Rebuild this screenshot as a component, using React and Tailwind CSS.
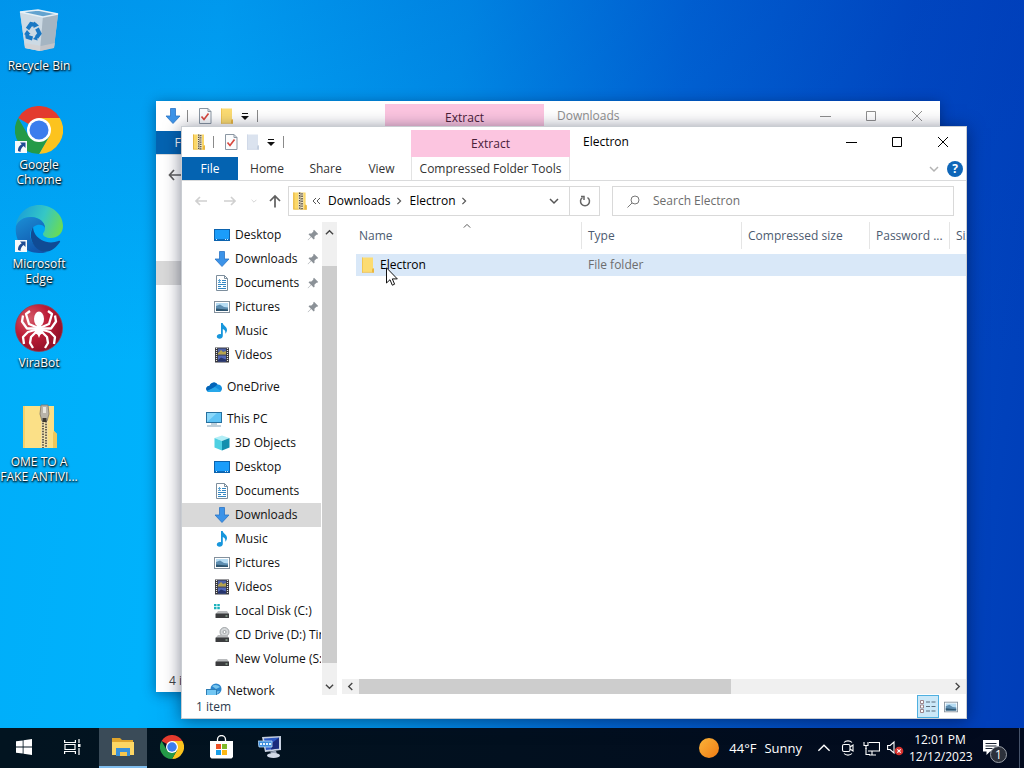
import React from "react";

/* ── Small icons ── */
const ZipIcon = ({ className }) => (
  <svg viewBox="0 0 16 16" className={className} aria-hidden="true">
    <path d="M2 .5h11v10.500l1 1v3.500H2z" fill="#fbd869" />
    <path d="M2 .5h1v15H2zM2 14.800h12v.7H2z" fill="#e6b640" />
    <path d="M12 15.500v-3l1-1.500 1 1v3.500z" fill="#e9b740" />
    <rect x="6.500" y="0.500" width="4.500" height="15" fill="#efe6c8" />
    <path d="M7.700.5v15M9.800 1v14.500" stroke="#4d463c" strokeWidth="1.300" strokeDasharray="1.200 1" />
    <path d="M8.700 1.500v14" stroke="#7a705f" strokeWidth="0.800" strokeDasharray="1 1.200" />
  </svg>
);

const FolderIcon = ({ className, faded }) => (
  <svg viewBox="0 0 16 16" className={className} aria-hidden="true">
    <path d="M2 .5h11v10.500l1 1v3.500H2z" fill={faded ? "#dbe3ef" : "#fcdc72"} />
    <path d="M2 .5h.8v15H2z" fill={faded ? "#cdd7e6" : "#efc24c"} />
    <path d="M12 15.500v-3l1-1.500 1 1v3.500z" fill={faded ? "#c5d0e0" : "#eab640"} />
    <path d="M2 14.900h12v.7H2z" fill={faded ? "#cdd7e6" : "#ebbd52"} />
  </svg>
);

const CheckDocIcon = ({ className }) => (
  <svg viewBox="0 0 16 16" className={className} aria-hidden="true">
    <path d="M2.500.5h8.500l3 3v12H2.500z" fill="#fbfcfd" stroke="#8b97a3" />
    <path d="M11 .5v3h3" fill="none" stroke="#8b97a3" />
    <path d="M4.500 8.500l2.500 3 4.500-6" fill="none" stroke="#d8483f" strokeWidth="1.700" />
  </svg>
);

const DownArrowIcon = ({ className }) => (
  <svg viewBox="0 0 16 16" className={className} aria-hidden="true">
    <path d="M5.500.5h5v7.500h4.500L8 15.500 1 8h4.500z" fill="#3c93e8" stroke="#2a74c5" strokeWidth="0.800" />
  </svg>
);

const DesktopIcon = ({ className }) => (
  <svg viewBox="0 0 16 16" className={className} aria-hidden="true">
    <rect x="0.500" y="2.500" width="15" height="11" fill="#1b9dfa" stroke="#0c63ae" />
    <path d="M1 12.500h14" stroke="#0b6cbd" />
    <path d="M2 12.500h1M11 12.500h1M13 12.500h1" stroke="#cfe8fb" />
  </svg>
);

const DocumentIcon = ({ className }) => (
  <svg viewBox="0 0 16 16" className={className} aria-hidden="true">
    <path d="M2.500.5h8l3 3v12h-11z" fill="#fff" stroke="#7d8e9d" />
    <path d="M10.500.5v3h3" fill="none" stroke="#7d8e9d" />
    <path d="M8 5.500h4M8 7.500h4M4 9.500h8M4 11.500h3M9 11.500h3M4 13.500h8" stroke="#3487c3" />
    <path d="M4 5.500h3M5.500 4v4M4 7.500h3" stroke="#5fa5d4" />
  </svg>
);

const PictureIcon = ({ className }) => (
  <svg viewBox="0 0 16 16" className={className} aria-hidden="true">
    <rect x="0.500" y="2.500" width="15" height="11" fill="#fff" stroke="#84919d" />
    <rect x="2" y="4" width="12" height="8" fill="#b6dcf3" />
    <path d="M2 7l4-1.500 4 2.500 4 .5V12H2z" fill="#5d8db0" />
    <path d="M2 9.500l5 .5 7 .5V12H2z" fill="#2d5570" />
  </svg>
);

const MusicIcon = ({ className }) => (
  <svg viewBox="0 0 16 16" className={className} aria-hidden="true">
    <path d="M7 0h1.700c.5 2.500 4.300 3.500 4.300 7 0 1.500-.7 2.900-1.700 3.800.5-2.500-.5-4-2.500-4.800V13c0 1.500-1.500 2.800-3.300 2.800-1.600 0-2.700-.9-2.700-2.200 0-1.700 2-2.900 4.200-2.400z" fill="#1796dc" />
  </svg>
);

const VideoIcon = ({ className }) => (
  <svg viewBox="0 0 16 16" className={className} aria-hidden="true">
    <rect x="1" y="0.500" width="14" height="15" fill="#38383e" />
    <path d="M2.500 1v14M13.500 1v14" stroke="#e8e8e8" strokeWidth="1.200" strokeDasharray="1 1" />
    <rect x="4" y="1.500" width="8" height="6" fill="#4d61a8" />
    <path d="M4 6l3-3 2 2 3-1v3.500H4z" fill="#b5a34d" />
    <rect x="4" y="8.500" width="8" height="6" fill="#5268b8" />
    <path d="M4 13l3-2.500 5 2v2H4z" fill="#27346c" />
  </svg>
);

const CloudIcon = ({ className }) => (
  <svg viewBox="0 0 16 16" className={className} aria-hidden="true">
    <path d="M3.500 7A4.500 4.500 0 0 1 11.500 5.500c3 0 4.500 2 4.500 4 0 2-1.500 3.500-3.500 3.500H3.500A3 3 0 0 1 3.500 7z" fill="#1490df" />
    <path d="M0 10c0-2 1.500-3 3.500-3.300C4.500 3.500 9 2 11.500 5.500L6 10l-5 2z" fill="#0364b8" />
    <path d="M1 12l8-4 6 4c-.5.600-1.500 1-2.500 1h-9c-1 0-2-.4-2.500-1z" fill="#28a8ea" />
  </svg>
);

const PcIcon = ({ className }) => (
  <svg viewBox="0 0 16 16" className={className} aria-hidden="true">
    <rect x="0.500" y="1.500" width="15" height="10" fill="#5fc3f5" stroke="#28719f" />
    <path d="M1 11V2h10z" fill="#8bd8fa" />
    <path d="M5 13h6M1 15h14" stroke="#7fa0b5" />
  </svg>
);

const CubeIcon = ({ className }) => (
  <svg viewBox="0 0 16 16" className={className} aria-hidden="true">
    <path d="M8 .5L15.500 3 8 6 .5 3z" fill="#b3eef6" />
    <path d="M.5 3L8 6v9.500L.5 12.500z" fill="#4fd0e2" />
    <path d="M15.500 3L8 6v9.500l7.500-3z" fill="#148fad" />
  </svg>
);

const DiskIcon = ({ className, kind }) => (
  <svg viewBox="0 0 16 16" className={className} aria-hidden="true">
    {kind === "cd" && (
      <>
        <circle cx="10.500" cy="5" r="4.500" fill="#d5d8da" stroke="#8c9093" strokeWidth="0.800" />
        <circle cx="10.500" cy="5" r="1.500" fill="#fff" stroke="#8c9093" strokeWidth="0.800" />
      </>
    )}
    {kind === "system" && <path d="M0 1h2.500v2.200H0zM3.300 1h2.500v2.200H3.300zM0 4h2.500v2.200H0zM3.300 4h2.500v2.200H3.300z" fill="#1bb2bd" />}
    <path d="M4 8h9l2 3H1.500z" fill="#b9bbbd" />
    <rect x="1.500" y="10.500" width="13.500" height="4.500" rx="0.500" fill="#3b3c3e" />
    <path d="M11.500 13h2" stroke="#b6d9bd" />
  </svg>
);

const NetworkIcon = ({ className }) => (
  <svg viewBox="0 0 16 16" className={className} aria-hidden="true">
    <circle cx="10" cy="6" r="5.500" fill="#2b86cd" />
    <path d="M6 3c3-2 6-1 8 1l-4 2zM8 9l6-1-3 3z" fill="#77c5ee" />
    <rect x="0.500" y="6.500" width="10" height="6" fill="#72c6f3" stroke="#2f7eb4" />
    <path d="M2 14.500h8" stroke="#6f93ac" />
  </svg>
);

const PinIcon = ({ className }) => (
  <svg viewBox="0 0 12 12" className={className} aria-hidden="true">
    <path d="M7 .8L11.200 5l-1 .8-.8-.1-2 2 .2 2-.9.9-2.500-2.500L1 11.200l-.3-.3 3.200-3.200L1.500 5.300l.9-.9 2 .2 2-2-.2-.9z" fill="#8b9197" />
  </svg>
);

const Chevron = ({ className, d = "M1 3l4 4 4-4", width = 1.5 }) => (
  <svg viewBox="0 0 10 10" className={className} fill="none" stroke="currentColor" strokeWidth={width} aria-hidden="true">
    <path d={d} />
  </svg>
);

const UP = "M1 7l4-4 4 4";
const LEFT = "M7 1L3 5l4 4";
const RIGHT = "M3 1l4 4-4 4";

const ArrowIcon = ({ className, d }) => (
  <svg viewBox="0 0 14 14" className={className} fill="none" stroke="currentColor" strokeWidth="1.700" aria-hidden="true">
    <path d={d} />
  </svg>
);

const CaretBar = () => (
  <svg viewBox="0 0 8 7" className="h-[7px] w-2" aria-hidden="true">
    <path d="M1 0h6v1H1zM0 3h8L4 7z" fill="#111" />
  </svg>
);

/* ── Desktop shortcut icons ── */
const ShortcutBadge = () => (
  <g>
    <rect x="0" y="35" width="12" height="12" fill="#f7f9fb" />
    <path d="M5 36.500h5.500V42l-1.900-1.900C6.500 42 5.500 43.500 5.500 46L3 45c-.3-3 1.200-5.200 3.700-6.800z" fill="#1f4b93" />
  </g>
);

const RecycleBinIcon = () => (
  <svg viewBox="0 0 48 48" className="size-12" aria-hidden="true">
    <path d="M5 5l18-2 20 4-4 33-14 4-15-3z" fill="#c3d3de" />
    <path d="M5 5l23 4-3 35-15-3z" fill="#cddae4" />
    <path d="M28 9l15-2-4 34-14 3z" fill="#a5b5c2" />
    <path d="M10 36l16 3 14-3-1 5-14 3-15-3z" fill="#d6cfcd" opacity="0.600" />
    <path d="M5 5l18-2 20 4-15 3z" fill="#63a3cf" stroke="#e6f0f6" strokeWidth="1.300" />
    <g fill="none" stroke="#1a78c4" strokeWidth="4">
      <path d="M12.500 22l3.500-5 5 1" />
      <path d="M22 21.500l2.500 5-3 4" />
      <path d="M17.500 31.500l-5-1.500-.5-4" />
    </g>
    <path d="M19 14.500l5 4-5.500 2.500zM22.500 33.500l-4.500-1.500 4-4zM9 27.500l3-4.500 3.500 4z" fill="#1a78c4" />
  </svg>
);

const ChromeIcon = ({ className, shortcut }) => (
  <svg viewBox="0 0 48 48" className={className} aria-hidden="true">
    <path d="M24 24L3.200 12A24 24 0 0 1 44.800 12z" fill="#e33b2e" />
    <path d="M24 12h20.800A24 24 0 0 1 24 48l10.400-18z" fill="#fcc31e" />
    <path d="M13.600 30L3.200 12A24 24 0 0 0 24 48l10.400-18z" fill="#249a47" />
    <circle cx="24" cy="24" r="12" fill="#fff" />
    <circle cx="24" cy="24" r="9.500" fill="#3b7ded" />
    {shortcut && <ShortcutBadge />}
  </svg>
);

const EdgeIcon = () => (
  <svg viewBox="0 0 48 48" className="size-12" aria-hidden="true">
    <defs>
      <linearGradient id="edgeTop" x1="0" x2="1" y1="0.300" y2="0.600">
        <stop offset="0" stopColor="#1a9fd8" />
        <stop offset="0.550" stopColor="#35c7c5" />
        <stop offset="1" stopColor="#6adb55" />
      </linearGradient>
      <linearGradient id="edgeBody" x1="0" x2="0.500" y1="0" y2="1">
        <stop offset="0" stopColor="#1b8fd6" />
        <stop offset="1" stopColor="#1157ad" />
      </linearGradient>
    </defs>
    <path d="M1 21C2 9 12 0 24 0c14 0 24 10 24 21 0 8-6 12-12 12-5 0-8-2-8-4 0-1.500 2-2 2-6C30 17 24 12 16 12 8 12 3 16 1 21z" fill="url(#edgeTop)" />
    <path d="M1 21c2-5 7-9 15-9 8 0 14 5 14 11-1-3-5-4-8-3-6 2-8 8-6 14 2 7 9 11 16 13-3 1-5 1-8 1C9 48-1 36 1 21z" fill="url(#edgeBody)" />
    <path d="M18 22c-5 9-1 20 8 24 8 3 15-3 19-9 .5-1-.5-1.500-1.500-1-5 2-12 2-17-1-5-3-8-7-8.500-13z" fill="#104b94" />
    <ShortcutBadge />
  </svg>
);

const SpiderIcon = () => (
  <svg viewBox="0 0 48 48" className="size-12" aria-hidden="true">
    <defs>
      <radialGradient id="ball" cx="0.300" cy="0.300" r="0.800">
        <stop offset="0" stopColor="#d55a68" />
        <stop offset="0.500" stopColor="#bb1c36" />
        <stop offset="1" stopColor="#8c1027" />
      </radialGradient>
    </defs>
    <circle cx="24" cy="24" r="23.500" fill="url(#ball)" stroke="#9c3b4b" strokeWidth="0.800" />
    <ellipse cx="24" cy="15" rx="5" ry="7.500" fill="#fff" />
    <ellipse cx="24" cy="26" rx="4.500" ry="5" fill="#fff" />
    <path d="M22 29l2 5 2-5z" fill="#fff" />
    <g fill="none" stroke="#fff" strokeWidth="2.300" strokeLinejoin="round">
      <path d="M21 23l-7-3-3-10 4-3M27 23l7-3 3-10-4-3" />
      <path d="M20 24.500l-8 0-5-7 1-6M28 24.500l8 0 5-7-1-6" />
      <path d="M20 26l-7 2-5 5 1 7M28 26l7 2 5 5-1 7" />
      <path d="M21 28l-5 5-1 6 3 5M27 28l5 5 1 6-3 5" />
    </g>
  </svg>
);

const BigZipIcon = () => (
  <svg viewBox="0 0 48 48" className="size-12" aria-hidden="true">
    <path d="M8 3h31v25l3 3v14H8z" fill="#fbe087" />
    <path d="M8 3h2v42H8z" fill="#f6d169" />
    <path d="M38 45V30l1-2 3 3v14z" fill="#f0c75a" />
    <path d="M26 3h7v42h-7z" fill="#f0dfa6" />
    <path d="M28 17v28M31 18v27" stroke="#6a6254" strokeWidth="2" strokeDasharray="1.500 1.200" />
    <path d="M26 2h7l1 9-2 7h-5l-2-7z" fill="#b9b4aa" stroke="#7b756a" strokeWidth="0.800" />
    <rect x="28" y="4" width="3" height="6" fill="#e9e6df" />
    <rect x="27.500" y="15" width="4" height="4" fill="#3c3831" />
  </svg>
);

const shortcuts = [
  { label: "Recycle Bin", icon: <RecycleBinIcon /> },
  { label: "Google Chrome", icon: <ChromeIcon className="size-12" shortcut /> },
  { label: "Microsoft Edge", icon: <EdgeIcon /> },
  { label: "ViraBot", icon: <SpiderIcon /> },
  { label: "OME TO A FAKE ANTIVI...", icon: <BigZipIcon /> },
];

const quickAccess = [
  { label: "Desktop", icon: DesktopIcon, pinned: true },
  { label: "Downloads", icon: DownArrowIcon, pinned: true },
  { label: "Documents", icon: DocumentIcon, pinned: true },
  { label: "Pictures", icon: PictureIcon, pinned: true },
  { label: "Music", icon: MusicIcon },
  { label: "Videos", icon: VideoIcon },
];

const thisPc = [
  { label: "3D Objects", icon: CubeIcon },
  { label: "Desktop", icon: DesktopIcon },
  { label: "Documents", icon: DocumentIcon },
  { label: "Downloads", icon: DownArrowIcon, active: true },
  { label: "Music", icon: MusicIcon },
  { label: "Pictures", icon: PictureIcon },
  { label: "Videos", icon: VideoIcon },
  { label: "Local Disk (C:)", icon: DiskIcon, kind: "system" },
  { label: "CD Drive (D:) Tin", icon: DiskIcon, kind: "cd" },
  { label: "New Volume (S:)", icon: DiskIcon },
];

const NavRow = ({ item, root }) => {
  const Icon = item.icon;
  return (
    <li>
      <button
        type="button"
        className={`flex h-6 w-full items-center gap-[5px] whitespace-nowrap text-left ${root ? "pl-6" : "pl-8"} ${item.active ? "bg-[#d9d9d9]" : ""}`}
      >
        <Icon className="size-4 shrink-0" kind={item.kind} />
        <span className="flex-1">{item.label}</span>
        {item.pinned && <PinIcon className="mr-0.5 size-3 shrink-0" />}
      </button>
    </li>
  );
};

/* Title bar and ribbon tabs, shared by both Explorer windows */
const WindowHeader = ({ title, active, icon }) => (
  <header className="flex border-b border-[#dadbdc]">
    <div className="w-[229px] shrink-0">
      <div className="flex h-[30px] items-center pl-[9px]">
        {icon}
        <span className="ml-1.5 h-3 w-px bg-[#8a8a8a]" />
        <button type="button" aria-label="Properties" className="ml-[9px]"><CheckDocIcon className="size-4" /></button>
        <button type="button" aria-label="New folder" className="ml-1.5"><FolderIcon className="size-4" faded={active} /></button>
        <button type="button" aria-label="Customize" className="ml-1.5"><CaretBar /></button>
        <span className="ml-2 h-3 w-px bg-[#8a8a8a]" />
      </div>
      <nav className="flex h-[23px] text-[#333]">
        <button type="button" className="w-14 bg-[#0463b1] text-white">File</button>
        <button type="button" className="w-[58px]">Home</button>
        <button type="button" className="w-[59px]">Share</button>
        <button type="button" className="w-[53px]">View</button>
      </nav>
    </div>
    <div className="flex w-[159px] shrink-0 flex-col">
      <div className="mt-[3px] flex h-[27px] items-center justify-center bg-[#fcc5e0] text-[#4a2038]">Extract</div>
      {active && (
        <button type="button" className="h-[23px] whitespace-nowrap border-x border-[#e3e3e3] text-[#333]">Compressed Folder Tools</button>
      )}
    </div>
    <div className="min-w-0 flex-1">
      <div className={`flex h-[30px] items-center ${active ? "text-black" : "text-[#8f8f8f]"}`}>
        <h1 className="flex-1 pl-[13px]">{title}</h1>
        <button type="button" aria-label="Minimize" className="flex h-full w-[45px] items-center justify-center">
          <svg viewBox="0 0 11 11" className="size-[11px]" stroke="currentColor" aria-hidden="true"><path d="M0 5.500h11" /></svg>
        </button>
        <button type="button" aria-label="Maximize" className="flex h-full w-[46px] items-center justify-center">
          <svg viewBox="0 0 10 10" className="size-2.5" fill="none" stroke="currentColor" aria-hidden="true"><path d="M.5.5h9v9h-9z" /></svg>
        </button>
        <button type="button" aria-label="Close" className="flex h-full w-[46px] items-center justify-center">
          <svg viewBox="0 0 10 10" className="size-2.5" stroke="currentColor" aria-hidden="true"><path d="M0 0l10 10M10 0L0 10" /></svg>
        </button>
      </div>
      <div className="flex h-[23px] items-center justify-end gap-2 pr-[3px]">
        <button type="button" aria-label="Expand the ribbon" className="text-[#b3b3b3]"><Chevron className="size-2.5" /></button>
        <button type="button" aria-label="Help" className="size-4 rounded-full bg-[#0f66b8] text-[12px] font-bold leading-4 text-white">?</button>
      </div>
    </div>
  </header>
);

const BackWindow = () => (
  <section className="absolute top-[101px] right-[84px] bottom-9 left-[156px] flex flex-col bg-white shadow-[0_2px_12px_rgba(0,20,60,0.45)]">
    <WindowHeader title="Downloads" icon={<DownArrowIcon className="size-4" />} />
    <div className="flex h-10 items-center pl-3 text-[#5f5f5f]">
      <ArrowIcon className="size-3.5" d="M13 7H1.500M6 2L1.500 7 6 12" />
    </div>
    <div className="mt-[66px] h-6 w-[139px] bg-[#d9d9d9]" />
    <footer className="mt-auto h-[22px] pl-[13px] leading-[22px] text-[#444]">4 items</footer>
  </section>
);

const AddressRow = () => (
  <div className="flex pt-[5px] pr-3 pb-1.5">
    <div className="flex h-[30px] w-[106px] shrink-0 items-center text-[#d0d0d0]">
      <button type="button" aria-label="Back" className="ml-3"><ArrowIcon className="size-3.5" d="M13 7H2M6 3L2 7l4 4" /></button>
      <button type="button" aria-label="Forward" className="ml-[15px]"><ArrowIcon className="size-3.5" d="M1 7h11M8 3l4 4-4 4" /></button>
      <button type="button" aria-label="Recent locations" className="ml-3.5"><Chevron className="size-1.5" /></button>
      <button type="button" aria-label="Up" className="ml-[11px] text-[#5f5f5f]"><ArrowIcon className="size-3.5" d="M7 13.500V2M2 7l5-5 5 5" /></button>
    </div>
    <div className="flex h-[30px] min-w-0 flex-1 items-center border border-[#d9d9d9]">
      <ZipIcon className="ml-0.5 size-[18px] shrink-0" />
      <svg viewBox="0 0 9 8" className="ml-[3px] h-2 w-[9px] shrink-0" fill="none" stroke="#555" aria-hidden="true"><path d="M4 1L1 4l3 3M8 1L5 4l3 3" /></svg>
      <button type="button" className="ml-[7px]">Downloads</button>
      <Chevron className="ml-1 size-2 text-[#555]" d={RIGHT} />
      <button type="button" className="ml-[7px]">Electron</button>
      <Chevron className="ml-1 size-2 text-[#555]" d={RIGHT} />
      <button type="button" aria-label="Previous locations" className="ml-auto mr-2.5 text-[#555]"><Chevron className="size-2.5" /></button>
      <button type="button" aria-label="Refresh" className="flex h-full w-[30px] shrink-0 items-center justify-center border-l border-[#d9d9d9]">
        <svg viewBox="0 0 12 12" className="size-3" fill="none" stroke="#666" strokeWidth="1.500" aria-hidden="true">
          <path d="M8.500 2.500A4.500 4.500 0 1 1 3.500 2.500" /><path d="M2 1.500h3v3.500" />
        </svg>
      </button>
    </div>
    <label className="ml-3 flex h-[30px] w-[342px] shrink-0 items-center border border-[#d9d9d9] pl-3.5">
      <svg viewBox="0 0 13 13" className="size-[13px]" fill="none" stroke="#777" aria-hidden="true">
        <circle cx="8" cy="5" r="4" /><path d="M5 8l-4.500 4.500" />
      </svg>
      <input type="search" aria-label="Search Electron" placeholder="Search Electron" className="ml-[13px] min-w-0 flex-1 outline-none placeholder:text-[#6d6d6d]" />
    </label>
  </div>
);

const columns = [
  { label: "Name", width: "w-[226px]", pad: "pl-[3px]" },
  { label: "Type", width: "w-40", pad: "pl-1.5" },
  { label: "Compressed size", width: "w-32", pad: "pl-1.5" },
  { label: "Password ...", width: "w-20", pad: "pl-1.5" },
  { label: "Size", width: "w-20", pad: "pl-1.5" },
];

const FileList = () => (
  <div className="flex min-w-0 flex-1 flex-col pl-[5px]">
    <div className="relative flex-1 overflow-hidden pl-3.5">
      <table className="w-[674px] min-w-full table-fixed border-collapse text-left">
        <thead>
          <tr>
            {columns.map((c) => (
              <th key={c.label} scope="col" className={`${c.width} p-0 pb-[5px] align-top font-normal text-[#4c5b70]`}>
                <div className={`h-[27px] border-r border-[#e5e5e5] leading-[27px] whitespace-nowrap ${c.pad}`}>{c.label}</div>
              </th>
            ))}
          </tr>
        </thead>
        <tbody>
          <tr className="h-[22px] bg-[#d9e8f8] text-[#6d6d6d]">
            <td className="p-0">
              <div className="flex items-center gap-1 pl-1 text-black">
                <FolderIcon className="size-4" />
                Electron
              </div>
            </td>
            <td className="p-0 pl-1.5">File folder</td>
            <td />
            <td />
            <td />
          </tr>
        </tbody>
      </table>
      <Chevron className="absolute top-0 left-[121px] size-2 text-[#555]" d={UP} width={1.2} />
    </div>
    <div className="mb-px flex h-[15px] items-center bg-[#f0f0f0] text-[#444]">
      <button type="button" aria-label="Scroll left" className="flex w-[17px] justify-center"><Chevron className="size-[9px]" d={LEFT} /></button>
      <div className="h-full flex-1"><div className="h-full w-[63%] bg-[#cdcdcd]" /></div>
      <button type="button" aria-label="Scroll right" className="flex w-[17px] justify-center"><Chevron className="size-[9px]" d={RIGHT} /></button>
    </div>
  </div>
);

const FrontWindow = () => (
  <section className="absolute top-[126px] right-[57px] bottom-[9px] left-[181px] flex flex-col border border-[#c9cdd2] bg-white shadow-[0_2px_16px_rgba(0,10,40,0.5)]">
    <WindowHeader title="Electron" active icon={<ZipIcon className="size-4" />} />
    <AddressRow />
    <div className="flex min-h-0 flex-1">
      <nav aria-label="Folders" className="w-[139px] shrink-0 overflow-hidden pt-px text-[#111]">
        <ul>{quickAccess.map((n) => <NavRow key={n.label} item={n} />)}</ul>
        <ul className="mt-2"><NavRow root item={{ label: "OneDrive", icon: CloudIcon }} /></ul>
        <ul className="mt-2">
          <NavRow root item={{ label: "This PC", icon: PcIcon }} />
          {thisPc.map((n) => <NavRow key={n.label} item={n} />)}
        </ul>
        <ul className="mt-2"><NavRow root item={{ label: "Network", icon: NetworkIcon }} /></ul>
      </nav>
      <div className="ml-px flex w-[15px] shrink-0 flex-col bg-[#f0f0f0] text-[#444]">
        <button type="button" aria-label="Scroll up" className="flex h-5 items-center justify-center"><Chevron className="size-[9px]" d={UP} /></button>
        <div className="flex flex-1 flex-col pt-6"><div className="flex-1 bg-[#cdcdcd]" /></div>
        <button type="button" aria-label="Scroll down" className="mt-3.5 flex h-[18px] items-center justify-center"><Chevron className="size-[9px]" /></button>
      </div>
      <FileList />
    </div>
    <footer className="flex h-[23px] items-center pl-3.5 pr-[5px] text-[#2b3b4e]">
      <span className="flex-1">1 item</span>
      <button type="button" aria-label="Details view" className="flex h-[23px] w-[22px] items-center justify-center border border-[#4fb0e0] bg-[#cbe8f8]">
        <svg viewBox="0 0 16 13" className="h-[13px] w-4" fill="none" stroke="#5b6d7c" aria-hidden="true">
          <path d="M.5.5h3v3h-3zM.5 5h3v3h-3zM.5 9.500h3v3h-3z" fill="#fff" stroke="#9a8389" />
          <path d="M6 2h4M11.500 2h4M6 6.500h4M11.500 6.500h4M6 11h4M11.500 11h4" />
        </svg>
      </button>
      <button type="button" aria-label="Large icons view" className="ml-0.5 p-[3px]"><PictureIcon className="size-3.5" /></button>
    </footer>
  </section>
);

/* ── Taskbar ── */
const TaskButton = ({ label, active, children }) => (
  <button
    type="button"
    aria-label={label}
    className={`flex h-full w-12 items-center justify-center border-b-2 ${active ? "border-[#7fbdee] bg-[#3a4b58]" : "border-transparent"}`}
  >
    {children}
  </button>
);

const Taskbar = () => (
  <footer className="flex h-10 shrink-0 items-center bg-linear-to-r from-[#021420] via-[#02101f] to-[#020a1e] text-white">
    <div className="flex h-full">
      <TaskButton label="Start">
        <svg viewBox="0 0 16 16" className="size-4" fill="#fff" aria-hidden="true">
          <path d="M0 2.300l6.700-.9v6.200H0zM7.500 1.300L16 0v7.600H7.500zM0 8.400h6.700v6.200L0 13.700zM7.500 8.400H16V16l-8.500-1.300z" />
        </svg>
      </TaskButton>
      <TaskButton label="Task view">
        <svg viewBox="0 0 17 16" className="h-4 w-[17px]" fill="none" stroke="#fff" strokeWidth="1.200" aria-hidden="true">
          <path d="M.6 1v2.500h10.800V1M.6 15v-2.500h10.800V15M1 5.500h10v5H1zM15 0v4M15 9v7" />
          <path d="M14 5h2.500v3H14z" fill="#fff" stroke="none" />
        </svg>
      </TaskButton>
      <div className="ml-[3px] flex gap-px">
        <TaskButton label="File Explorer" active>
          <svg viewBox="0 0 22 20" className="h-5 w-[22px]" aria-hidden="true">
            <path d="M0 1h8l2 2h11v5H0z" fill="#e0a52c" />
            <path d="M0 5h22v13H0z" fill="#fcd664" />
            <path d="M4 11h14v8h-3v-4H8v4H4z" fill="#3990d8" />
            <path d="M8 15h7v4H8z" fill="#f6c64d" />
          </svg>
        </TaskButton>
        <TaskButton label="Google Chrome"><ChromeIcon className="size-6" /></TaskButton>
        <TaskButton label="Microsoft Store">
          <svg viewBox="0 0 23 24" className="h-6 w-[23px]" aria-hidden="true">
            <path d="M7.500 6V4.500a4 4 0 0 1 8 0V6" fill="none" stroke="#fff" strokeWidth="1.300" />
            <path d="M0 6h23v16l-1.500 1.500h-20L0 22z" fill="#fff" />
            <path d="M6 9h5v5H6z" fill="#ef5126" />
            <path d="M12 9h5v5h-5z" fill="#7fb92a" />
            <path d="M6 15h5v5H6z" fill="#1a9fe8" />
            <path d="M12 15h5v5h-5z" fill="#fdb813" />
          </svg>
        </TaskButton>
        <TaskButton label="Remote desktop">
          <svg viewBox="0 0 24 24" className="size-6" aria-hidden="true">
            <path d="M4 2l19-1v14l-16 2z" fill="#c9d2e2" />
            <path d="M6 3.500l15-1v11l-13 1.500z" fill="#2e59c4" />
            <path d="M14 8l7-5.500v11l-8 1z" fill="#1a2c7d" />
            <path d="M0 6h14v6H1z" fill="#3f8fdd" stroke="#bcdcf7" strokeWidth="0.800" />
            <path d="M2 9h11" stroke="#e6f3ff" strokeWidth="1.800" strokeDasharray="2 1" />
            <path d="M12 16.500l6-.7 1 3.500-5 1z" fill="#9aa5b8" />
            <ellipse cx="15.500" cy="20.500" rx="6.500" ry="2.500" fill="#d3dae6" />
          </svg>
        </TaskButton>
      </div>
    </div>
    <div className="ml-auto flex h-full items-center">
      <button type="button" className="flex items-center text-[13px]">
        <span className="size-5 rounded-full bg-linear-to-br from-[#fbb53a] to-[#ee7a10]" />
        <span className="ml-2.5">44°F</span>
        <span className="ml-2">Sunny</span>
      </button>
      <button type="button" aria-label="Show hidden icons" className="ml-[15px]"><Chevron className="size-3.5" d={UP} width={1} /></button>
      <button type="button" aria-label="Meet Now" className="ml-2.5">
        <svg viewBox="0 0 14 16" className="h-4 w-3.5" fill="none" stroke="#fff" strokeWidth="1.100" aria-hidden="true">
          <path d="M3 2.500C5 .3 9 .3 11 2.500M3 13.500c2 2.200 6 2.200 8 0" />
          <rect x="1.500" y="4.500" width="7.500" height="7" rx="1.500" />
          <path d="M9 7l3-2v6L9 9" />
        </svg>
      </button>
      <button type="button" aria-label="Network" className="ml-2">
        <svg viewBox="0 0 17 15" className="h-[15px] w-[17px]" fill="none" stroke="#fff" strokeWidth="1.100" aria-hidden="true">
          <path d="M6 1.500h10.500v8.500H5M9 10v4M6 14h7M3 7v6.500h4" />
          <path d="M1 1v3.500h4V1M3 4.500V8" />
        </svg>
      </button>
      <button type="button" aria-label="Volume muted" className="ml-[7px]">
        <svg viewBox="0 0 17 16" className="h-4 w-[17px]" fill="none" stroke="#fff" strokeWidth="1.100" aria-hidden="true">
          <path d="M.6 5.500h2.500L7 2v11L3.100 9.500H.6z" />
          <circle cx="12" cy="11" r="4.300" fill="#d8322e" stroke="none" />
          <path d="M10.300 9.300l3.400 3.400M13.700 9.300l-3.400 3.400" />
        </svg>
      </button>
      <button type="button" className="ml-[5px] w-[62px] whitespace-nowrap text-center leading-[17px]">
        <span className="block">12:01 PM</span>
        <span className="block">12/12/2023</span>
      </button>
      <button type="button" aria-label="Notifications, 1 new" className="relative ml-3 size-5">
        <svg viewBox="0 0 16 16" className="size-4" aria-hidden="true">
          <path d="M0 0h16v11.500H7L3.500 15v-3.500H0z" fill="#fff" />
          <path d="M2.500 3.500h11M2.500 6h11M2.500 8.500h7" stroke="#1b2433" />
        </svg>
        <span className="absolute top-2 left-[7px] size-[17px] rounded-full border border-[#9aa0a8] bg-[#2c313b] leading-[15px]">1</span>
      </button>
      <span className="ml-4 mr-1 h-full w-px bg-[#46536a]" />
    </div>
  </footer>
);

const MousePointer = () => (
  <svg viewBox="0 0 12 19" className="pointer-events-none absolute top-[267px] left-[386px] h-[19px] w-3" aria-hidden="true">
    <path d="M.5.800v15.200l3.500-3.300 2.300 5.500 2.300-1-2.300-5.300h5z" fill="#fff" stroke="#111" />
  </svg>
);

export default function App() {
  return (
    <div className="flex h-screen w-full flex-col overflow-hidden bg-[linear-gradient(97deg,#00adf9_0%,#00b2fc_20%,#0096ec_42%,#0068d6_62%,#004ac2_82%,#003db8_100%)] font-['Open_Sans','Noto_Sans',sans-serif] text-[12px] leading-4">
      <main className="relative min-h-0 flex-1 bg-[linear-gradient(180deg,rgba(0,50,180,0.2)_0%,transparent_50%)]">
        <ul className="w-[78px]">
          {shortcuts.map((s) => (
            <li key={s.label}>
              <button type="button" className="flex h-[99px] w-full flex-col items-center gap-[3px] pt-[7px] text-white">
                {s.icon}
                <span className="text-center leading-[15px] [text-shadow:0_1px_2px_#000,1px_1px_2px_#000]">{s.label}</span>
              </button>
            </li>
          ))}
        </ul>
        <BackWindow />
        <FrontWindow />
        <MousePointer />
      </main>
      <Taskbar />
    </div>
  );
}
